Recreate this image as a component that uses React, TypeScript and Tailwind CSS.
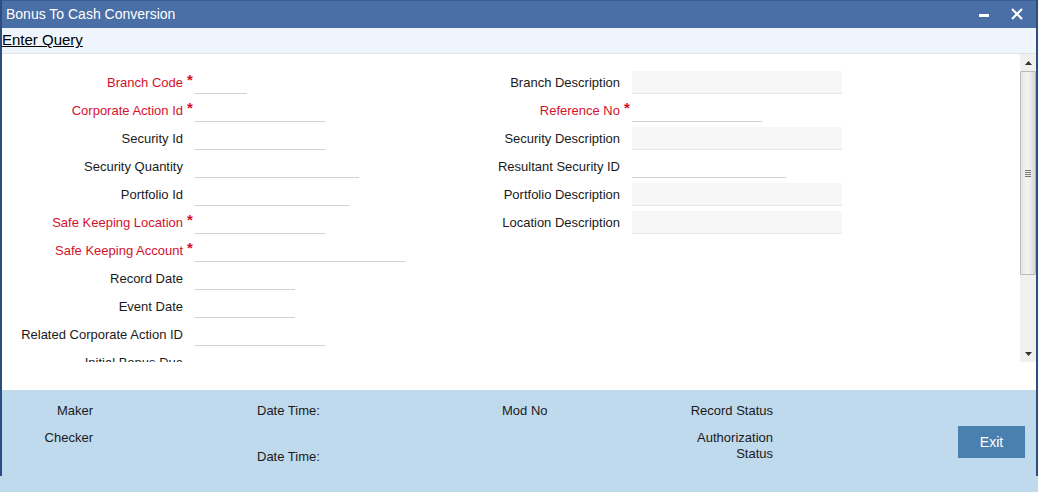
import React from "react";

type Row = { label: string; req?: boolean; w: number; ro?: boolean };

const left: Row[] = [
  { label: "Branch Code", req: true, w: 52 },
  { label: "Corporate Action Id", req: true, w: 130 },
  { label: "Security Id", w: 130 },
  { label: "Security Quantity", w: 164 },
  { label: "Portfolio Id", w: 154 },
  { label: "Safe Keeping Location", req: true, w: 130 },
  { label: "Safe Keeping Account", req: true, w: 210 },
  { label: "Record Date", w: 100 },
  { label: "Event Date", w: 100 },
  { label: "Related Corporate Action ID", w: 130 },
  { label: "Initial Bonus Due", w: 130 },
];

const right: Row[] = [
  { label: "Branch Description", w: 210, ro: true },
  { label: "Reference No", req: true, w: 130 },
  { label: "Security Description", w: 210, ro: true },
  { label: "Resultant Security ID", w: 154 },
  { label: "Portfolio Description", w: 210, ro: true },
  { label: "Location Description", w: 210, ro: true },
];

function Field({ r, lw }: { r: Row; lw: number }) {
  return (
    <div className="flex h-[23px] items-center">
      <div
        className={`text-right whitespace-nowrap ${r.req ? "text-[#d4112c]" : "text-[#1a1a1a]"}`}
        style={{ width: lw }}
      >
        {r.label}
      </div>
      <div className="w-[12px] h-full relative">
        {r.req && (
          <span className="absolute left-[4px] top-[1px] text-[#d4112c] text-[15px] font-bold leading-none">*</span>
        )}
      </div>
      <div
        className={`h-[23px] border-b ${r.ro ? "bg-[#f7f7f7] border-[#e6e6e6]" : "border-[#d2d2d2]"}`}
        style={{ width: r.w }}
      />
    </div>
  );
}

export default function App() {
  return (
    <div
      className="w-[1038px] h-[492px] overflow-hidden bg-[#bfd9ed] text-[13px]"
      style={{ fontFamily: '"Liberation Sans", Arial, sans-serif' }}
    >
      <div className="h-[476px] border-x-2 border-[#2d4c80] flex flex-col bg-white">
        <div className="h-[28px] bg-[#4a6ea6] border-t border-[#3a5c92] flex items-center justify-between pl-[4px] pr-[13px]">
          <span className="text-white text-[14px] -mt-[1px]">Bonus To Cash Conversion</span>
          <div className="flex items-center gap-[22px] text-white -mt-[2px]">
            <span className="block w-[10px] h-[3px] bg-white mt-[4px]" />
            <svg width="12" height="12" viewBox="0 0 12 12">
              <path d="M1 1L11 11M11 1L1 11" stroke="white" strokeWidth="2.2" />
            </svg>
          </div>
        </div>
        <div className="h-[26px] bg-[#eef5fd] border-b border-[#dde3ea] flex items-center">
          <span className="text-[15px] underline text-black">Enter Query</span>
        </div>
        <div className="flex h-[308px]">
          <div className="flex-1 overflow-hidden pt-[17px] flex">
            <div className="w-[428px] flex flex-col gap-[5px]">
              {left.map((r) => (
                <Field key={r.label} r={r} lw={181} />
              ))}
            </div>
            <div className="flex flex-col gap-[5px]">
              {right.map((r) => (
                <Field key={r.label} r={r} lw={190} />
              ))}
            </div>
          </div>
          <div className="w-[16px] bg-[#f0f0f0] flex flex-col items-stretch">
            <div className="h-[17px] flex items-center justify-center">
              <svg width="7" height="4" viewBox="0 0 7 4"><path d="M0 4L3.5 0L7 4Z" fill="#333" /></svg>
            </div>
            <div className="h-[204px] border border-[#b8b8b8] bg-gradient-to-r from-[#e6e6e6] via-[#f4f4f4] to-[#d8d8d8] flex items-center justify-center rounded-[1px]">
              <div className="flex flex-col gap-[1px]">
                <span className="block w-[6px] h-[1px] bg-[#777]" />
                <span className="block w-[6px] h-[1px] bg-[#777]" />
                <span className="block w-[6px] h-[1px] bg-[#777]" />
                <span className="block w-[6px] h-[1px] bg-[#777]" />
              </div>
            </div>
            <div className="flex-1" />
            <div className="h-[17px] flex items-center justify-center">
              <svg width="7" height="4" viewBox="0 0 7 4"><path d="M0 0L3.5 4L7 0Z" fill="#333" /></svg>
            </div>
          </div>
        </div>
        <div className="h-[28px]" />
        <div className="flex-1 bg-[#bfd9ed] relative text-[#1a1a1a] pt-[7px]">
          <div className="flex">
            <div className="w-[91px] text-right flex flex-col">
              <span className="h-[27px] leading-[27px]">Maker</span>
              <span className="h-[27px] leading-[27px]">Checker</span>
            </div>
            <div className="ml-[164px] w-[245px] flex flex-col">
              <span className="h-[27px] leading-[27px]">Date Time:</span>
              <span className="h-[19px]" />
              <span className="h-[27px] leading-[27px]">Date Time:</span>
            </div>
            <div className="w-[100px] flex flex-col">
              <span className="h-[27px] leading-[27px]">Mod No</span>
            </div>
            <div className="w-[171px] text-right flex flex-col">
              <span className="h-[27px] leading-[27px]">Record Status</span>
              <span className="leading-[16px] mt-[6px]">Authorization<br />Status</span>
            </div>
            <div className="ml-[185px] mt-[29px]">
              <div className="w-[67px] h-[32px] bg-[#4a80b0] text-white text-[14px] flex items-center justify-center">
                Exit
              </div>
            </div>
          </div>
        </div>
      </div>
    </div>
  );
}
